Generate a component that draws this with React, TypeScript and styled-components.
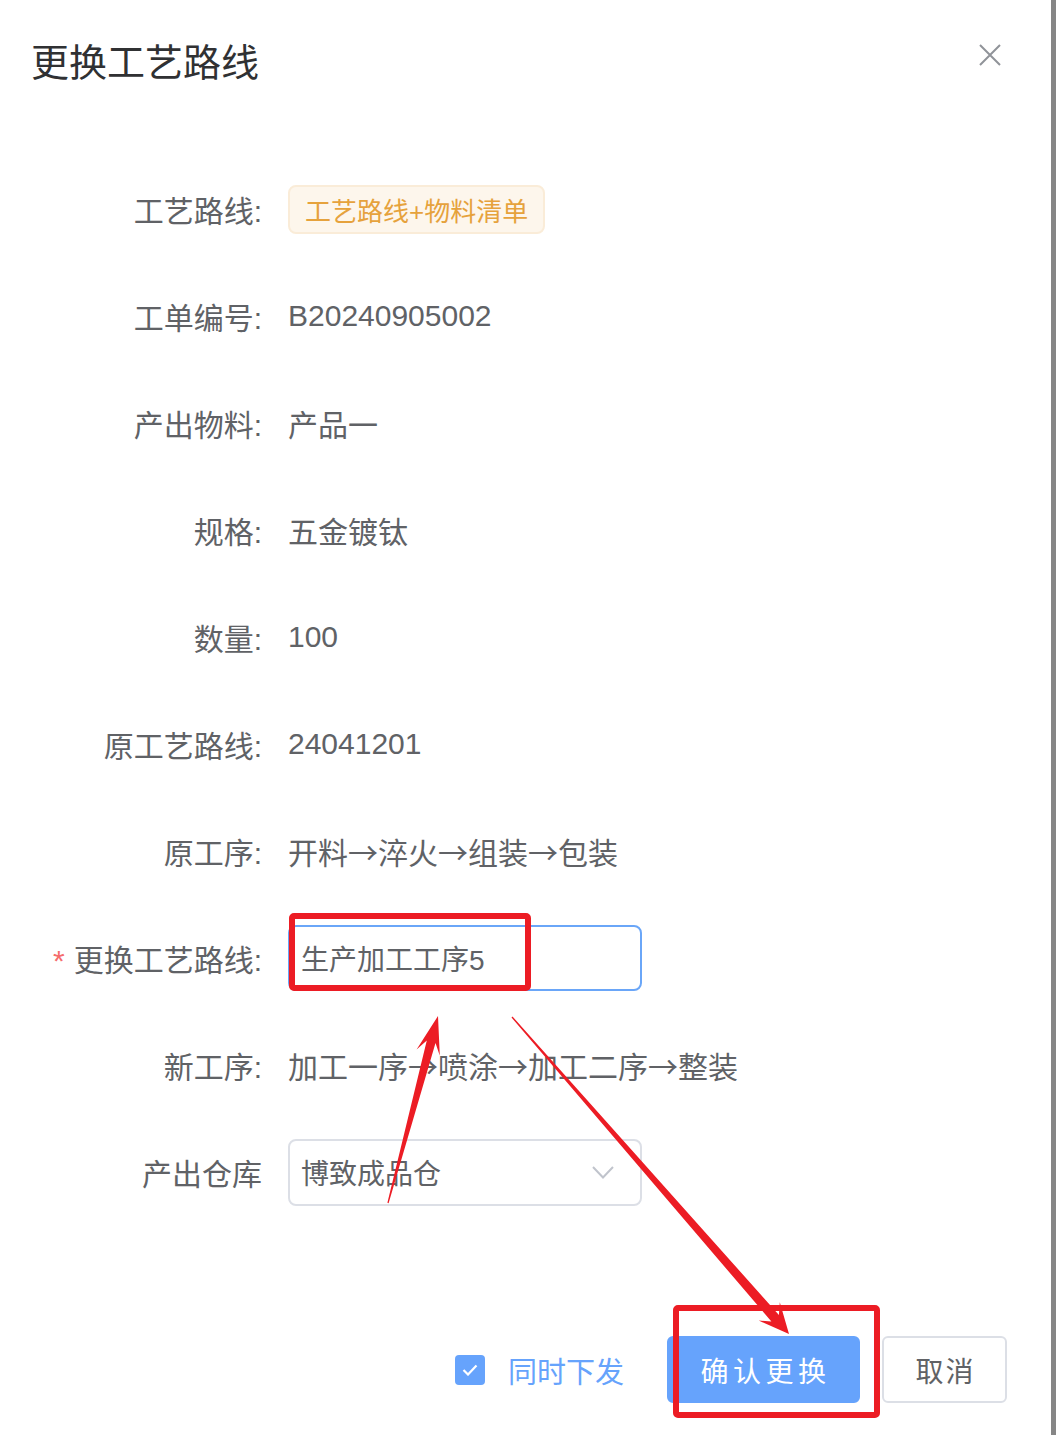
import styled, { createGlobalStyle } from "styled-components";

const GlobalStyle = createGlobalStyle`
  html, body {
    margin: 0;
    padding: 0;
  }
  body {
    background: linear-gradient(90deg, #bdbdbd 0, #868686 6px);
    background-attachment: fixed;
    background-position: right top;
    font-family: "Liberation Sans", "Noto Sans CJK SC", sans-serif;
  }
`;

type Point = [number, number];

// tapered arrow like the screenshot annotation tool draws
const arrowPoints = (
  tail: Point,
  tip: Point,
  head: number,
  barb: number,
  shaft: number
) => {
  const dx = tip[0] - tail[0];
  const dy = tip[1] - tail[1];
  const len = Math.hypot(dx, dy);
  const ux = dx / len;
  const uy = dy / len;
  const nx = -uy;
  const ny = ux;
  const at = (along: number, side: number): Point => [
    tip[0] - ux * along + nx * side,
    tip[1] - uy * along + ny * side,
  ];
  const pts: Point[] = [
    [tail[0] + nx * 0.6, tail[1] + ny * 0.6],
    at(head * 0.7, shaft),
    at(head, barb),
    tip,
    at(head, -barb),
    at(head * 0.7, -shaft),
    [tail[0] - nx * 0.6, tail[1] - ny * 0.6],
  ];
  return pts.map((p) => p.map((v) => v.toFixed(1)).join(",")).join(" ");
};

// steps joined by a full width arrow
const Steps = ({ items }: { items: string[] }) => (
  <>
    {items.map((item, i) => (
      <span key={item + i}>
        {i > 0 && <StepArrow>→</StepArrow>}
        {item}
      </span>
    ))}
  </>
);

const rows = [
  { label: "工单编号:", value: "B20240905002" },
  { label: "产出物料:", value: "产品一" },
  { label: "规格:", value: "五金镀钛" },
  { label: "数量:", value: "100" },
  { label: "原工艺路线:", value: "24041201" },
];

const App = () => {
  return (
    <>
      <GlobalStyle />
      <Dialog>
        <Header>
          <Title>更换工艺路线</Title>
          <CloseButton>
            <svg width="22" height="22" viewBox="0 0 22 22">
              <path
                d="M1 1 L21 21 M21 1 L1 21"
                stroke="#909399"
                strokeWidth="2"
                fill="none"
              />
            </svg>
          </CloseButton>
        </Header>

        <Form>
          <Row>
            <Label>工艺路线:</Label>
            <Value>
              <Tag>工艺路线+物料清单</Tag>
            </Value>
          </Row>

          {rows.map(({ label, value }) => (
            <Row key={label}>
              <Label>{label}</Label>
              <Value>{value}</Value>
            </Row>
          ))}

          <Row>
            <Label>原工序:</Label>
            <Value>
              <Steps items={["开料", "淬火", "组装", "包装"]} />
            </Value>
          </Row>

          <Row>
            <Label>
              <Required>*</Required>更换工艺路线:
            </Label>
            <Value>
              <InputBox $focused>生产加工工序5</InputBox>
            </Value>
          </Row>

          <Row>
            <Label>新工序:</Label>
            <Value>
              <Steps items={["加工一序", "喷涂", "加工二序", "整装"]} />
            </Value>
          </Row>

          <Row>
            <Label>产出仓库</Label>
            <Value>
              <InputBox>
                博致成品仓
                <svg width="22" height="13" viewBox="0 0 22 13">
                  <path
                    d="M1 1 L11 11.5 L21 1"
                    stroke="#c0c4cc"
                    strokeWidth="2"
                    fill="none"
                  />
                </svg>
              </InputBox>
            </Value>
          </Row>
        </Form>

        <Footer>
          <CheckLabel>
            <CheckBox>
              <svg width="16" height="12" viewBox="0 0 16 12">
                <path
                  d="M1.5 6 L6 10.5 L14.5 1.5"
                  stroke="#fff"
                  strokeWidth="2.2"
                  fill="none"
                />
              </svg>
            </CheckBox>
            同时下发
          </CheckLabel>
          <Button $primary>确认更换</Button>
          <Button>取消</Button>
        </Footer>

        <Annotations width="1056" height="1435" viewBox="0 0 1056 1435">
          <rect x="292" y="916" width="236" height="72" rx="2" />
          <rect x="676" y="1308" width="201" height="107" rx="2" />
          <polygon points={arrowPoints([388, 1203], [438, 1016], 38, 12, 4.5)} />
          <polygon points={arrowPoints([512, 1017], [789, 1334], 30, 14, 5)} />
        </Annotations>
      </Dialog>
    </>
  );
};

const Dialog = styled.div`
  position: relative;
  display: flex;
  flex-direction: column;
  width: 1051px;
  height: 1435px;
  background: #ffffff;
`;

const Header = styled.div`
  display: flex;
  justify-content: space-between;
  align-items: flex-start;
  padding: 40px 50px 0 31px;
`;

const Title = styled.h1`
  margin: 0;
  font-size: 38px;
  line-height: 46px;
  font-weight: 400;
  color: #303133;
`;

const CloseButton = styled.div`
  display: flex;
  width: 22px;
  height: 22px;
  margin-top: 4px;
  cursor: pointer;
`;

const Form = styled.div`
  display: flex;
  flex-direction: column;
  gap: 39px;
  padding-top: 89px;
`;

const Row = styled.div`
  display: grid;
  grid-template-columns: 262px 1fr;
  column-gap: 26px;
  align-items: center;
  height: 68px;
`;

const Label = styled.div`
  text-align: right;
  white-space: nowrap;
  font-size: 30px;
  color: #606266;
`;

const Required = styled.span`
  margin-right: 9px;
  color: #f56c6c;
`;

const Value = styled.div`
  display: flex;
  align-items: center;
  font-size: 30px;
  color: #606266;
  white-space: nowrap;
`;

const StepArrow = styled.span`
  font-family: "Noto Sans CJK SC", sans-serif;
`;

const Tag = styled.span`
  display: inline-flex;
  align-items: center;
  height: 49px;
  padding: 0 15px;
  box-sizing: border-box;
  border: 2px solid #faecd8;
  border-radius: 8px;
  background: #fdf6ec;
  color: #e6a23c;
  font-size: 26px;
`;

const InputBox = styled.div<{ $focused?: boolean }>`
  display: flex;
  justify-content: space-between;
  align-items: center;
  box-sizing: border-box;
  width: 354px;
  height: ${({ $focused }) => ($focused ? "66px" : "67px")};
  padding: 0 26px 0 11px;
  border: 2px solid ${({ $focused }) => ($focused ? "#6aa6f8" : "#dcdfe6")};
  border-radius: 8px;
  font-size: 28px;
  color: #606266;
`;

const Footer = styled.div`
  display: flex;
  justify-content: flex-end;
  align-items: center;
  gap: 22px;
  margin-top: auto;
  padding: 0 44px 32px 0;
`;

const CheckLabel = styled.label`
  display: flex;
  align-items: center;
  gap: 23px;
  margin-right: 21px;
  font-size: 29px;
  color: #66a3fc;
`;

const CheckBox = styled.span`
  display: flex;
  align-items: center;
  justify-content: center;
  width: 30px;
  height: 30px;
  border-radius: 4px;
  background: #66a3fc;
`;

const Button = styled.button<{ $primary?: boolean }>`
  display: flex;
  align-items: center;
  justify-content: center;
  box-sizing: border-box;
  width: ${({ $primary }) => ($primary ? "193px" : "125px")};
  height: 67px;
  padding: 0 0 0 ${({ $primary }) => ($primary ? "4px" : "2px")};
  border: 2px solid ${({ $primary }) => ($primary ? "#66a3fc" : "#dcdfe6")};
  border-radius: 6px;
  background: ${({ $primary }) => ($primary ? "#66a3fc" : "#ffffff")};
  color: ${({ $primary }) => ($primary ? "#ffffff" : "#606266")};
  font-family: inherit;
  font-size: 28px;
  letter-spacing: ${({ $primary }) => ($primary ? "4.5px" : "2px")};
`;

const Annotations = styled.svg`
  position: absolute;
  left: 0;
  top: 0;
  pointer-events: none;

  rect {
    fill: none;
    stroke: #ec1c24;
    stroke-width: 6;
  }

  polygon {
    fill: #ec1c24;
  }
`;

export default App;
